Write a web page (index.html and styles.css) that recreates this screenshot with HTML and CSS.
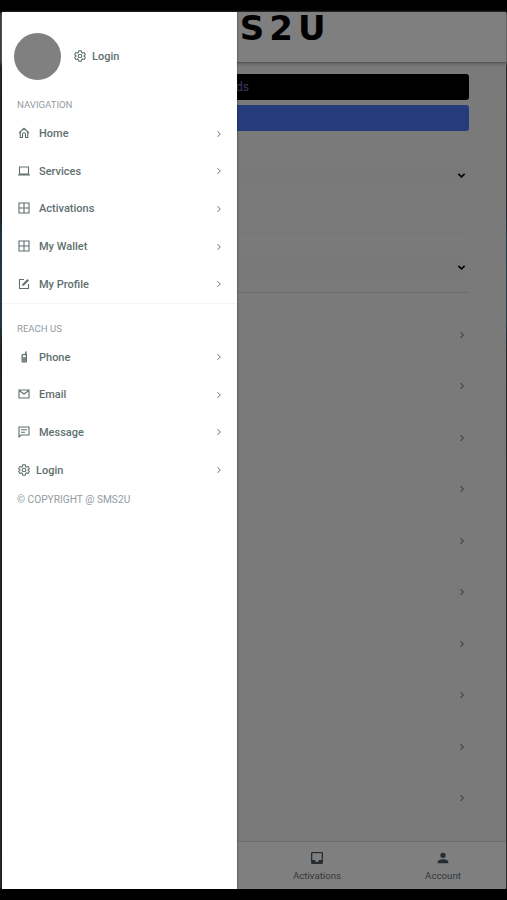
FILE: index.html
```html
<!DOCTYPE html>
<html lang="en">
<head>
<meta charset="utf-8">
<title>SMS2U</title>
<link rel="stylesheet" href="styles.css">
</head>
<body>
<svg class="sprite" aria-hidden="true">
  <symbol id="chev" viewBox="0 0 8 8"><path d="M2.500 1.200 5.300 4 2.500 6.800"/></symbol>
  <symbol id="down" viewBox="0 0 8 8"><path d="M1.200 2.600 4 5.200 6.800 2.600"/></symbol>
  <symbol id="gear" viewBox="0 0 24 24"><path d="m9.500 1.500-.7 3.500-2 1.200-3.200-1-2.300 4L4 11.500v1L1.300 14.800l2.300 4 3.200-1 2 1.200.7 3.500h5l.7-3.500 2-1.200 3.200 1 2.300-4L20 12.500v-1l2.700-2.300-2.300-4-3.200 1-2-1.200-.7-3.500z"/><circle cx="12" cy="12" r="3.500"/></symbol>
  <symbol id="home" viewBox="0 0 24 24"><path d="m2 12 10-9.500L22 12M4.500 10v11H9v-6.500a3 3 0 0 1 6 0V21h4.500V10"/></symbol>
  <symbol id="laptop" viewBox="0 0 24 24"><path d="M3 4h18v14H3zM0 20h24"/></symbol>
  <symbol id="grid" viewBox="0 0 24 24"><path d="M2 2h20v20H2zM12 2v20M2 12h20"/></symbol>
  <symbol id="edit" viewBox="0 0 24 24"><path d="M12 3H3v18h18v-9"/><path d="m8 16 1-4L19 2l3 3-10 10z" fill="currentColor" stroke="none"/></symbol>
  <symbol id="phone" viewBox="0 0 24 24"><path fill="currentColor" stroke="none" fill-rule="evenodd" d="M14 1h3v4l1 1v15q0 2-2 2H9q-2 0-2-2V8q0-2 2-2h5zM9.500 8.500v4h6v-4zM9 15v1.500h2V15zm4 0v1.500h2V15zm-4 4v1.500h2V19zm4 0v1.500h2V19z"/></symbol>
  <symbol id="mail" viewBox="0 0 24 24"><path d="M2 4h20v16H2zM2.500 5l9.500 7 9.500-7"/></symbol>
  <symbol id="chat" viewBox="0 0 24 24"><path d="M2 2h20v16H6l-4 4zM6 7.500h12M6 12.500h8"/></symbol>
  <symbol id="inbox" viewBox="0 0 24 24"><path fill="currentColor" stroke="none" fill-rule="evenodd" d="M5 3h14q2 0 2 2v14q0 2-2 2H5q-2 0-2-2V5q0-2 2-2zm0 2v10h4q0 3 3 3t3-3h4V5z"/></symbol>
  <symbol id="person" viewBox="0 0 24 24"><path fill="currentColor" stroke="none" d="M12 12a4 4 0 1 0 0-8 4 4 0 0 0 0 8zm0 2c-3 0-8 1.300-8 4v2h16v-2c0-2.700-5-4-8-4z"/></symbol>
</svg>
<div class="screen">
  <header class="topbar"><span class="logo">SMS2U</span></header>
  <main class="content">
    <div class="button dark"><span>ds</span></div>
    <div class="button blue"></div>
    <div class="select first"><svg><use href="#down"/></svg></div>
    <div class="divider"></div>
    <div class="select second"><svg><use href="#down"/></svg></div>
    <ul class="list">
      <li><svg><use href="#chev"/></svg></li><li><svg><use href="#chev"/></svg></li>
      <li><svg><use href="#chev"/></svg></li><li><svg><use href="#chev"/></svg></li>
      <li><svg><use href="#chev"/></svg></li><li><svg><use href="#chev"/></svg></li>
      <li><svg><use href="#chev"/></svg></li><li><svg><use href="#chev"/></svg></li>
      <li><svg><use href="#chev"/></svg></li><li><svg><use href="#chev"/></svg></li>
    </ul>
  </main>
  <nav class="tabs">
    <div class="tab"><svg><use href="#inbox"/></svg><span>Activations</span></div>
    <div class="tab"><svg><use href="#person"/></svg><span>Account</span></div>
  </nav>
  <div class="scrim"></div>
  <aside class="drawer">
    <div class="user"><div class="avatar"></div><svg class="icon"><use href="#gear"/></svg><span>Login</span></div>
    <h2>NAVIGATION</h2>
    <div class="row"><svg class="icon"><use href="#home"/></svg><span>Home</span><svg class="go"><use href="#chev"/></svg></div>
    <div class="row"><svg class="icon"><use href="#laptop"/></svg><span>Services</span><svg class="go"><use href="#chev"/></svg></div>
    <div class="row"><svg class="icon"><use href="#grid"/></svg><span>Activations</span><svg class="go"><use href="#chev"/></svg></div>
    <div class="row"><svg class="icon"><use href="#grid"/></svg><span>My Wallet</span><svg class="go"><use href="#chev"/></svg></div>
    <div class="row"><svg class="icon"><use href="#edit"/></svg><span>My Profile</span><svg class="go"><use href="#chev"/></svg></div>
    <h2 class="reach">REACH US</h2>
    <div class="row"><svg class="icon"><use href="#phone"/></svg><span>Phone</span><svg class="go"><use href="#chev"/></svg></div>
    <div class="row"><svg class="icon"><use href="#mail"/></svg><span>Email</span><svg class="go"><use href="#chev"/></svg></div>
    <div class="row"><svg class="icon"><use href="#chat"/></svg><span>Message</span><svg class="go"><use href="#chev"/></svg></div>
    <div class="row tight"><svg class="icon"><use href="#gear"/></svg><span>Login</span><svg class="go"><use href="#chev"/></svg></div>
    <h2 class="copy">© COPYRIGHT @ SMS2U</h2>
  </aside>
</div>
</body>
</html>
```
FILE: styles.css
```css
* { box-sizing: border-box; }
body {
  margin: 0;
  height: 900px;
  padding: 12px 1px 11px 2px;
  overflow: hidden;
  font-family: Roboto, sans-serif;
  background: linear-gradient(#000 12px, #29292c 13px, #25252a 210px, #203a48 240px, #253e48 320px, #242427 350px, #29292c 888px, #000 889px);
}
svg { fill: none; stroke: currentColor; flex: none; }
.sprite { position: absolute; width: 0; height: 0; }
.screen {
  position: relative;
  height: 877px;
  display: flex;
  flex-direction: column;
  background: #f4f4f4;
}
.topbar {
  height: 51px;
  flex: none;
  background: #fff;
  text-align: center;
  border-bottom: 1px solid #aaa;
  box-shadow: 0 1px 3px #bbb;
}
.logo {
  display: block;
  padding-right: 6px;
  font: bold 34px/33px "DejaVu Sans", sans-serif;
  letter-spacing: 5px;
  color: #000;
}
.content { flex: 1; min-height: 0; padding: 11px 37px 0 36px; }
.button { height: 26px; margin-bottom: 5px; border-radius: 3px; }
.dark { background: #000; color: #7a70b4; font-size: 12px; line-height: 27px; padding-left: 198px; }
.blue { background: #4878f6; }
.select {
  display: flex;
  justify-content: flex-end;
  align-items: center;
  padding-right: 3px;
  height: 24px;
  background: #f2f2f2;
}
.select svg { width: 9px; height: 9px; color: #000; stroke-width: 1.4; }
.first { margin-top: 32px; }
.divider { height: 1px; margin: 46px 0 21px; background: #ebebeb; }
.list { list-style: none; margin: 13px 0 0; padding: 16px 0 0; border-top: 1px solid #dcdcdc; }
.list li { height: 51.5px; display: flex; align-items: center; justify-content: flex-end; padding-right: 3px; }
.list svg { width: 8px; height: 8px; color: #8a8a8a; stroke-width: 1.1; }
.tabs {
  height: 48px;
  flex: none;
  display: flex;
  justify-content: flex-end;
  background: #fff;
  border-top: 1px solid #ddd;
}
.tab {
  width: 126px;
  display: flex;
  flex-direction: column;
  align-items: center;
  padding-top: 8px;
  font-size: 9.7px;
  line-height: 12px;
  color: #697276;
}
.tab svg { width: 16px; height: 16px; margin-bottom: 4px; color: #4c5b65; }
.scrim { position: absolute; inset: 0; background: rgba(0, 0, 0, .5); }
.drawer {
  position: absolute;
  top: 0;
  left: 0;
  bottom: 0;
  width: 235px;
  background: #fff;
  box-shadow: 0 0 2px rgba(0, 0, 0, .5);
  color: #60706f;
  font-size: 11px;
  font-weight: 500;
}
.user { height: 86px; padding: 2px 0 0 12px; display: flex; align-items: center; }
.avatar { width: 47px; height: 47px; margin-right: 13px; border-radius: 50%; background: #808080; }
.user .icon { margin-right: 6px; }
.icon { width: 12px; height: 12px; margin-top: -1px; stroke-width: 2.2; }
.drawer h2 {
  margin: 0;
  padding-left: 15px;
  height: 17px;
  font-size: 9.6px;
  line-height: 14px;
  font-weight: 400;
  color: #929b9f;
}
.row { height: 37.6px; display: flex; align-items: center; padding: 0 14px 0 15.5px; }
.row .icon { margin-right: 9.5px; }
.tight .icon { margin-right: 6.5px; }
.go { width: 8px; height: 8px; margin-left: auto; stroke-width: 1; }
.drawer .reach { height: 35.5px; padding-top: 18px; border-top: 1px solid #f3f4f4; }
.drawer .copy { height: 20px; padding-top: 4px; font-size: 10.2px; }
```
